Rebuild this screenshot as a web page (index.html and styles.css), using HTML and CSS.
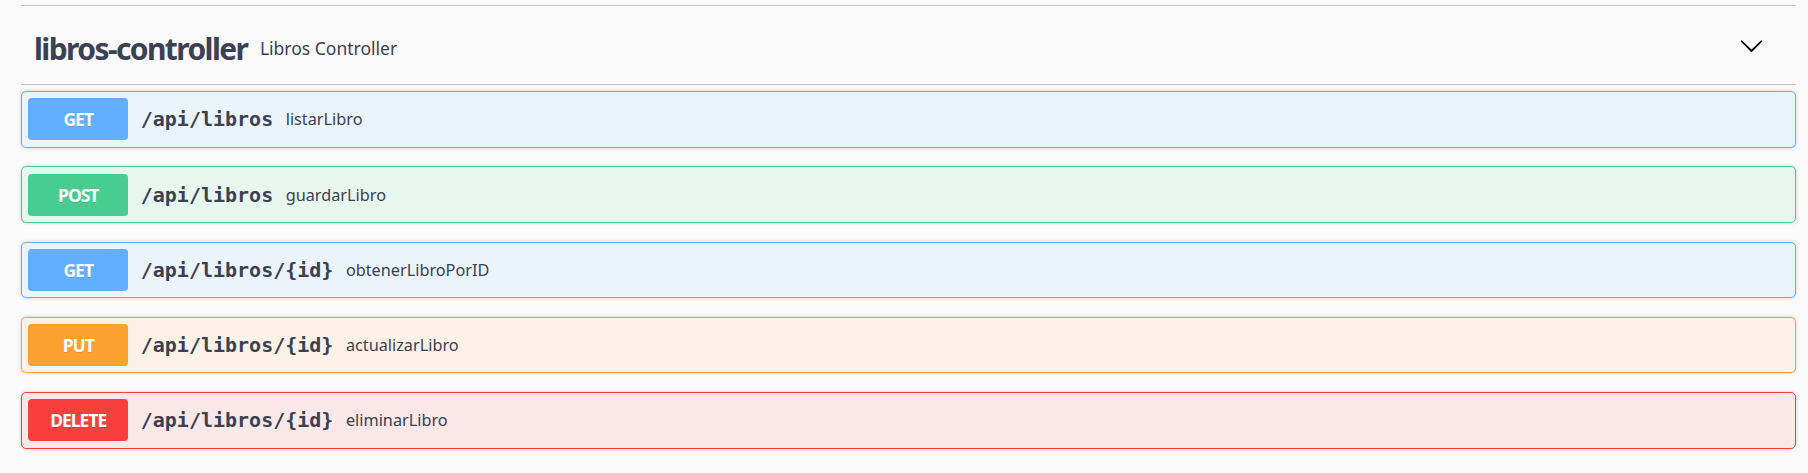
FILE: index.html
```html
<!DOCTYPE html>
<html lang="es">
<head>
<meta charset="utf-8">
<title>libros-controller</title>
<link rel="stylesheet" href="styles.css">
</head>
<body>
<div class="tag-section">
  <div class="tag-header">
    <h3 class="tag-title">libros-controller</h3>
    <span class="tag-desc">Libros Controller</span>
    <svg class="chevron" viewBox="0 0 20 20" width="25" height="25" aria-hidden="true"><path d="M17.418 6.109c.272-.268.709-.268.979 0s.271.701 0 .969l-7.908 7.83c-.27.268-.707.268-.979 0l-7.908-7.830c-.27-.268-.27-.701 0-.969.271-.268.709-.268.979 0L10 13.25l7.418-7.141z"/></svg>
  </div>
  <div class="ops">
    <div class="op op-get">
      <div class="summary"><span class="method">GET</span><span class="path">/api/libros</span><span class="desc">listarLibro</span></div>
    </div>
    <div class="op op-post">
      <div class="summary"><span class="method">POST</span><span class="path">/api/libros</span><span class="desc">guardarLibro</span></div>
    </div>
    <div class="op op-get">
      <div class="summary"><span class="method">GET</span><span class="path">/api/libros/{id}</span><span class="desc">obtenerLibroPorID</span></div>
    </div>
    <div class="op op-put">
      <div class="summary"><span class="method">PUT</span><span class="path">/api/libros/{id}</span><span class="desc">actualizarLibro</span></div>
    </div>
    <div class="op op-delete">
      <div class="summary"><span class="method">DELETE</span><span class="path">/api/libros/{id}</span><span class="desc">eliminarLibro</span></div>
    </div>
  </div>
</div>
</body>
</html>
```

FILE: styles.css
```css
html, body {
  margin: 0;
  padding: 0;
  background: #fafafa;
}

body {
  font-family: "Noto Sans", "Open Sans", sans-serif;
  color: #3b4151;
}

.tag-section {
  margin: 5px 12px 0 21px;
  border-top: 1px solid #c1c3c7;
}

.tag-header {
  display: flex;
  align-items: center;
  box-sizing: border-box;
  height: 79px;
  padding: 6.5px 32px 0 13px;
  border-bottom: 1px solid #c1c3c7;
}

.tag-title {
  margin: 0;
  font-size: 30px;
  font-weight: 700;
  letter-spacing: -1.6px;
  line-height: normal;
}

.tag-desc {
  flex: 1;
  padding: 0 12.5px;
  font-size: 17.5px;
}

.chevron {
  display: block;
  fill: #000;
  margin-bottom: 6px;
}

.ops {
  padding-top: 6px;
}

.op {
  border: 1px solid;
  border-radius: 5px;
  box-shadow: 0 0 3.75px rgba(0, 0, 0, 0.19);
  margin-bottom: 18.75px;
}

.summary {
  display: flex;
  align-items: center;
  padding: 6.25px;
}

.method {
  width: 100px;
  height: 42px;
  line-height: 42px;
  border-radius: 3.75px;
  text-align: center;
  color: #fff;
  font-size: 17.5px;
  font-weight: 700;
  letter-spacing: -1px;
  text-shadow: 0 1px 0 rgba(0, 0, 0, 0.1);
  flex-shrink: 0;
}

.path {
  padding: 0 12.5px;
  font-family: "DejaVu Sans Mono", monospace;
  font-weight: 700;
  font-size: 20px;
  color: #3b4151;
}

.desc {
  font-size: 16.25px;
  color: #3b4151;
}

.op-get { border-color: #61affe; background: #ebf3fb; }
.op-get .method { background: #61affe; }

.op-post { border-color: #49cc90; background: #e8f6f0; }
.op-post .method { background: #49cc90; }

.op-put { border-color: #fca130; background: #fbf1e6; }
.op-put .method { background: #fca130; }

.op-delete { border-color: #f93e3e; background: #fae7e7; }
.op-delete .method { background: #f93e3e; }
```
